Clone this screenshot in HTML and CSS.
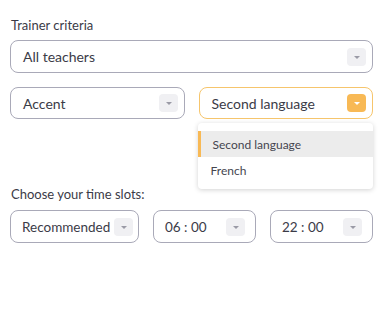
FILE: index.html
```html
<!DOCTYPE html>
<html lang="en">
<head>
    <meta charset="UTF-8">
    <meta name="viewport" content="width=device-width, initial-scale=1.0">
    <title>Trainer criteria</title>
<link rel="stylesheet" href="styles.css">
</head>
<body>
    <div class="wrapper">
        <p class="label">Trainer criteria</p>
        <div class="select">
            <span>All teachers</span>
            <span class="arrow"></span>
        </div>

        <div class="row">
            <div class="select">
                <span>Accent</span>
                <span class="arrow"></span>
            </div>
            <div class="dropdown-wrap">
                <div class="select open">
                    <span>Second language</span>
                    <span class="arrow"></span>
                </div>
                <ul class="menu">
                    <li class="selected">Second language</li>
                    <li>French</li>
                </ul>
            </div>
        </div>

        <p class="label slots">Choose your time slots:</p>
        <div class="row times">
            <div class="select">
                <span>Recommended</span>
                <span class="arrow"></span>
            </div>
            <div class="select">
                <span>06 : 00</span>
                <span class="arrow"></span>
            </div>
            <div class="select">
                <span>22 : 00</span>
                <span class="arrow"></span>
            </div>
        </div>
    </div>
</body>
</html>
```

FILE: styles.css
```css
*{
    margin: 0;
    padding: 0;
    box-sizing: border-box;
}
body{
    background-color: #fff;
    font-family: Lato, "Noto Sans", sans-serif;
    color: #3b3b47;
}
.wrapper{
    width: 383px;
    padding: 17px 10px 0;
}
.label{
    font-size: 13px;
    line-height: 16px;
    margin-left: 1px;
    margin-bottom: 7px;
}
.select{
    height: 33px;
    display: flex;
    align-items: center;
    justify-content: space-between;
    padding: 0 6px 0 12px;
    border: 1px solid #a9a9b8;
    border-radius: 8px;
    font-size: 14px;
}
.arrow{
    width: 19px;
    height: 18px;
    border-radius: 4px;
    background-color: #f0f0f3;
    position: relative;
}
.arrow::after{
    content: "";
    position: absolute;
    left: 7px;
    top: 8px;
    border-left: 3px solid transparent;
    border-right: 3px solid transparent;
    border-top: 3px solid #9a9aa6;
}
.row{
    display: grid;
    grid-template-columns: 1fr 1fr;
    column-gap: 14px;
    margin-top: 14px;
}
.row .select{
    height: 32px;
}
.dropdown-wrap{
    position: relative;
}
.select.open{
    border-color: #f6c56c;
}
.select.open .arrow{
    background-color: #f8b955;
}
.select.open .arrow::after{
    border-top-color: #fff;
}
.menu{
    position: absolute;
    left: -1px;
    right: 0;
    top: 36px;
    list-style: none;
    background-color: #fff;
    padding: 8px 0 6px;
    border-radius: 4px;
    box-shadow: 0 1px 5px rgba(0,0,0,0.18);
    font-size: 12px;
    color: #45454f;
}
.menu li{
    height: 26px;
    line-height: 27px;
    padding-left: 13px;
}
.menu li.selected{
    background-color: #ececec;
    border-left: 3px solid #f8b955;
    padding-left: 12px;
}
.slots{
    margin-top: 67px;
    margin-bottom: 8px;
}
.times{
    margin-top: 0;
    grid-template-columns: 129px 1fr 1fr;
}
.times .select{
    height: 33px;
    padding-left: 11px;
    padding-right: 10px;
}
.times .select:first-child{
    padding-right: 5px;
}
.times .select span:first-child{
    font-size: 13.5px;
}
```
